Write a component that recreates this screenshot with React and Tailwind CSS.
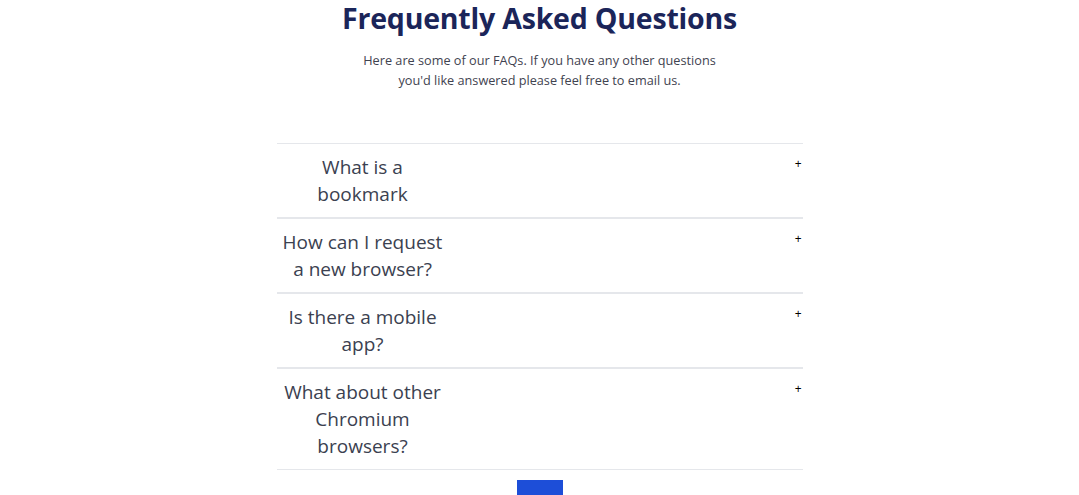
const faqs = [
  'What is a bookmark',
  'How can I request a new browser?',
  'Is there a mobile app?',
  'What about other Chromium browsers?'
];

export default function App() {
  return (
    <div className="min-h-screen bg-white font-['Open_Sans',sans-serif]">
      <div className="flex flex-col items-center pt-[1px]">
        <h1 className="text-[28.5px] leading-[34px] font-bold text-[#1b2559] tracking-[-0.2px]">Frequently Asked Questions</h1>
        <p className="mt-[15px] w-[360px] text-center text-[12.7px] leading-[20px] text-[#3f4350]">
          Here are some of our FAQs. If you have any other questions you'd like answered please feel free to email us.
        </p>
      </div>

      <div className="mx-auto mt-[53px] w-[526px]">
        {faqs.map((q) => (
          <div key={q} className="flex items-start justify-between border-y border-[#e5e7eb] pt-[10px] pb-[9px]">
            <div className="w-[172px] text-center text-[19px] leading-[27px] text-[#3b4150]">{q}</div>
            <span className="pr-[1px] pt-[4px] text-[12px] leading-[12px] text-black">+</span>
          </div>
        ))}
      </div>

      <div className="mt-[10px] flex justify-center">
        <button type="button" className="h-[20px] w-[46px] bg-[#1d4ed8]" aria-label="More" />
      </div>
    </div>
  );
}
